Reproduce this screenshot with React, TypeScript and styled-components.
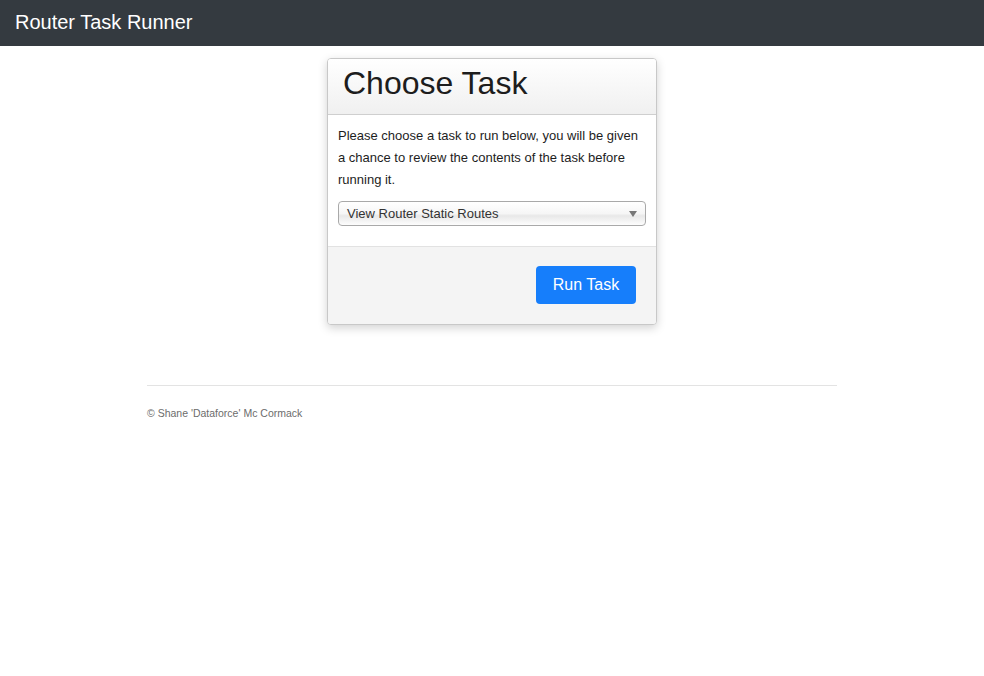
import React from 'react';
import styled, { createGlobalStyle } from 'styled-components';

const GlobalStyle = createGlobalStyle`
  html, body {
    margin: 0;
    padding: 0;
    background: #ffffff;
    font-family: "Liberation Sans", Arial, sans-serif;
    color: #212529;
  }
`;

const Navbar = styled.nav`
  height: 46px;
  background: #343a40;
  display: flex;
  align-items: center;
  padding: 0 15px;
`;

const Brand = styled.a`
  color: #ffffff;
  font-size: 20px;
  text-decoration: none;
  margin-top: -2px;
`;

const Main = styled.main`
  display: flex;
  justify-content: center;
  padding-top: 12px;
`;

const Card = styled.div`
  width: 328px;
  border: 1px solid #c8c8c8;
  border-radius: 4px;
  box-shadow: 0 3px 10px rgba(0, 0, 0, 0.18);
  overflow: hidden;
  background: #ffffff;
`;

const CardHeader = styled.div`
  box-sizing: border-box;
  height: 56px;
  border-bottom: 1px solid #cfcfcf;
  background: linear-gradient(to bottom, #ffffff, #f0f0f0);
  display: flex;
  align-items: center;
  padding: 0 15px 6px;
`;

const Title = styled.h1`
  margin: 0;
  font-size: 32px;
  font-weight: 400;
  color: #1d1d1d;
`;

const CardBody = styled.div`
  padding: 10px 10px 20px;
  border-bottom: 1px solid #e2e2e2;
`;

const Intro = styled.p`
  margin: 0 0 10px;
  font-size: 13px;
  line-height: 22px;
  color: #1d1d1d;
`;

const SelectBox = styled.div`
  height: 23px;
  border: 1px solid #a9a9a9;
  border-radius: 4px;
  background: linear-gradient(to bottom, #ffffff 0%, #f6f6f6 50%, #e8e8e8 60%, #fdfdfd 100%);
  display: flex;
  align-items: center;
  justify-content: space-between;
  padding: 0 8px;
  font-size: 13px;
  color: #333;
`;

const Caret = styled.span`
  width: 0;
  height: 0;
  border-left: 4px solid transparent;
  border-right: 4px solid transparent;
  border-top: 6px solid #777;
`;

const CardFooter = styled.div`
  background: #f4f4f4;
  display: flex;
  justify-content: flex-end;
  padding: 19px 20px 20px;
`;

const Button = styled.button`
  width: 100px;
  height: 38px;
  padding: 0;
  border: none;
  border-radius: 4px;
  background: #167efb;
  color: #ffffff;
  font-family: inherit;
  font-size: 16px;
`;

const Container = styled.footer`
  width: 690px;
  margin: 60px auto 0;
`;

const Rule = styled.hr`
  margin: 0;
  border: none;
  border-top: 1px solid #e3e3e3;
`;

const Copy = styled.p`
  margin: 21px 0 0;
  font-size: 10.5px;
  color: #6c6c6c;
`;

export default function App() {
  return (
    <>
      <GlobalStyle />
      <Navbar>
        <Brand href="#">Router Task Runner</Brand>
      </Navbar>
      <Main>
        <Card>
          <CardHeader>
            <Title>Choose Task</Title>
          </CardHeader>
          <CardBody>
            <Intro>
              Please choose a task to run below, you will be given a chance to review the contents of the task before running it.
            </Intro>
            <SelectBox>
              <span>View Router Static Routes</span>
              <Caret />
            </SelectBox>
          </CardBody>
          <CardFooter>
            <Button>Run Task</Button>
          </CardFooter>
        </Card>
      </Main>
      <Container>
        <Rule />
        <Copy>© Shane 'Dataforce' Mc Cormack</Copy>
      </Container>
    </>
  );
}
